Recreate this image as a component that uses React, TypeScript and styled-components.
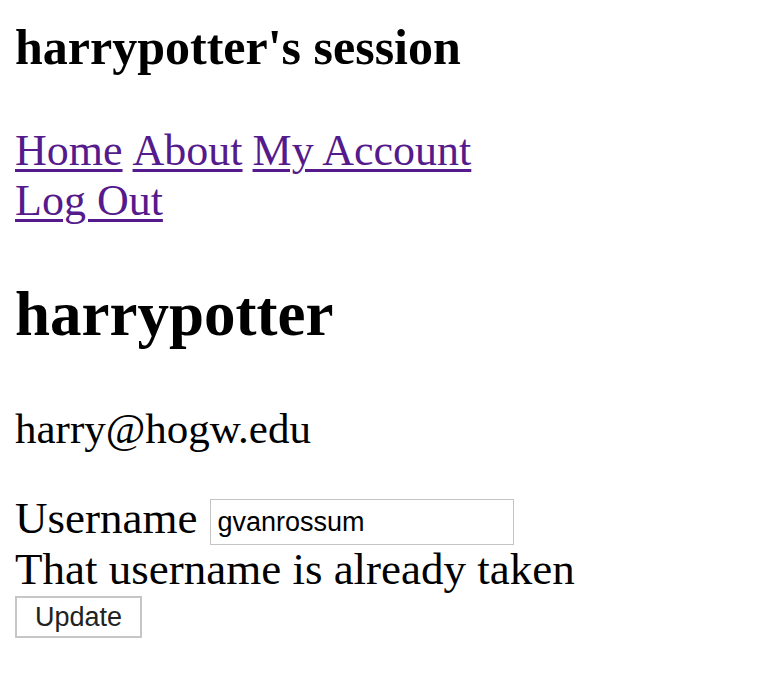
import React from "react";
import styled, { createGlobalStyle } from "styled-components";

const Global = createGlobalStyle`
  html, body { margin: 0; padding: 0; background: #fff; }
  body { font-family: "Liberation Serif", "Times New Roman", serif; color: #000; }
`;

const Page = styled.div`
  padding: 18px 15px 0 15px;
  display: flex;
  flex-direction: column;
  align-items: flex-start;
`;

const Title = styled.h2`
  margin: 0;
  font-size: 50px;
  line-height: 58px;
  font-weight: 700;
`;

const Nav = styled.nav`
  margin-top: 50px;
  display: flex;
  flex-wrap: wrap;
  column-gap: 10px;
  max-width: 480px;
`;

const NavLink = styled.a`
  font-size: 44px;
  line-height: 50px;
  color: #551a8b;
  text-decoration: underline;
  text-decoration-thickness: 3px;
  text-underline-offset: 4px;
`;

const UserName = styled.h1`
  margin: 52px 0 0 0;
  font-size: 63px;
  line-height: 72px;
  font-weight: 700;
`;

const Email = styled.p`
  margin: 55px 0 0 0;
  font-size: 43px;
  line-height: 48px;
`;

const Form = styled.form`
  margin-top: 40px;
  display: flex;
  flex-direction: column;
  align-items: flex-start;
`;

const Row = styled.div`
  display: flex;
  align-items: flex-start;
  height: 51px;
`;

const Label = styled.label`
  font-size: 45px;
  line-height: 51px;
  margin-right: 13px;
`;

const Input = styled.input`
  margin-top: 6px;
  box-sizing: border-box;
  width: 304px;
  height: 46px;
  border: 1px solid #c4c4c4;
  border-radius: 0;
  padding: 0 6px;
  font-family: "Liberation Sans", Arial, sans-serif;
  font-size: 27px;
  color: #000;
  outline: none;
`;

const ErrorText = styled.div`
  font-size: 45px;
  line-height: 50px;
`;

const Button = styled.button`
  margin-top: 2px;
  box-sizing: border-box;
  width: 127px;
  height: 42px;
  background: #fff;
  border: 2px solid #c6c6c6;
  border-radius: 0;
  font-family: "Liberation Sans", Arial, sans-serif;
  font-size: 27px;
  color: #222;
  padding: 0;
`;

export default function App() {
  return (
    <>
      <Global />
      <Page>
        <Title>harrypotter's session</Title>
        <Nav>
          <NavLink href="#">Home</NavLink>
          <NavLink href="#">About</NavLink>
          <NavLink href="#">My Account</NavLink>
          <NavLink href="#">Log Out</NavLink>
        </Nav>
        <UserName>harrypotter</UserName>
        <Email>harry@hogw.edu</Email>
        <Form onSubmit={(e) => e.preventDefault()}>
          <Row>
            <Label htmlFor="username">Username</Label>
            <Input id="username" defaultValue="gvanrossum" />
          </Row>
          <ErrorText>That username is already taken</ErrorText>
          <Button type="submit">Update</Button>
        </Form>
      </Page>
    </>
  );
}
